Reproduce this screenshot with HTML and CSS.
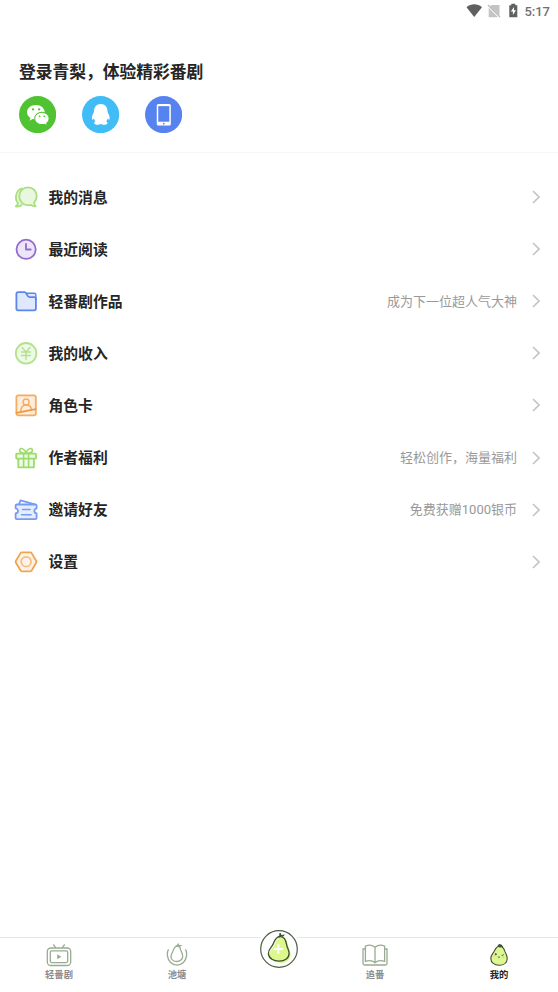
FILE: index.html
```html
<!DOCTYPE html>
<html lang="zh-CN">
<head>
<meta charset="utf-8">
<meta name="viewport" content="width=device-width, initial-scale=1">
<title>我的</title>
<link rel="stylesheet" href="styles.css">
</head>
<body>
<div class="app">
  <header class="status">
    <svg class="status-icons" viewBox="0 0 54 20">
      <path d="M.5 7.2C5.2 3.4 11.3 3.4 16 7.2L8.2 17Z" fill="#606060"/>
      <path d="M25.5 5h8v10.5L24 6.4ZM22.7 7.7v9.5H32Z" fill="#c4c4c4"/>
      <path d="M22 5l12 12" stroke="#b5b5b5" stroke-width="1.1"/>
      <path d="M43.3 5.2h2V3.8h4v1.4h2v12h-8Z" fill="#606060"/>
      <path d="M48 7l-3.2 4.6h2.1V15l3.1-4.7h-2Z" fill="#fff"/>
    </svg>
    <span class="time">5:17</span>
  </header>

  <section class="login">
    <h1 class="login-title">登录青梨，体验精彩番剧</h1>
    <div class="login-options">
      <svg class="login-icon" viewBox="0 0 37 37">
        <circle cx="18.5" cy="18.5" r="18.5" fill="#50c332"/>
        <path d="M16.8 9C11.9 9 8 12.1 8 16.2c0 2.4 1.3 4.4 3.4 5.7l-1 2.7 3.2-1.6c1.1.3 2 .4 3.3.4 4.9 0 8.7-3.2 8.7-7.2S21.7 9 16.8 9Z" fill="#fff"/>
        <circle cx="14" cy="13.4" r="1.15" fill="#50c332"/><circle cx="20" cy="13.4" r="1.15" fill="#50c332"/>
        <path d="M22.8 16.2c-4.1 0-7.2 2.7-7.2 6.1s3.1 6.1 7.2 6.1c.9 0 1.7-.1 2.5-.3l3 1.4-.8-2.5c1.6-1.2 2.5-2.8 2.5-4.7 0-3.4-3.1-6.1-7.2-6.1Z" fill="#fff" stroke="#50c332"/>
        <circle cx="20.5" cy="20.2" r=".9" fill="#50c332"/><circle cx="25.2" cy="20.2" r=".9" fill="#50c332"/>
      </svg>
      <svg class="login-icon" viewBox="0 0 37 37">
        <circle cx="18.5" cy="18.5" r="18.5" fill="#40bcf6"/>
        <path d="M18.7 8c-4.2 0-6.9 3.1-6.7 7.3 0 .7-.8 1.3-.7 2.2-1 1.7-1.8 3.6-1.3 5.7.4 1 1.3-.1 1.8-.8.3 1.1.8 2 1.6 2.8-1.1.5-1.6 1.2-1.2 2.2.8 1.8 5.3 1.5 6.5.2 1.2 1.3 5.8 1.6 6.5-.2.4-1-.2-1.7-1.2-2.2.8-.8 1.3-1.7 1.6-2.8.6.7 1.5 1.8 1.8.8.5-2.1-.3-4-1.4-5.7.1-.9-.6-1.5-.6-2.2.1-4.2-2.5-7.3-6.7-7.3Z" fill="#fff"/>
      </svg>
      <svg class="login-icon" viewBox="0 0 37 37">
        <circle cx="18.5" cy="18.5" r="18.5" fill="#5683f0"/>
        <rect x="11.7" y="8" width="14" height="21.3" rx="1.5" fill="#fff"/>
        <rect x="13.2" y="10.1" width="11" height="15.5" fill="#5683f0"/>
        <circle cx="18.7" cy="27.5" r=".9" fill="#5683f0"/>
      </svg>
    </div>
  </section>

  <main class="menu">
    <a class="row">
      <svg class="icon" viewBox="0 0 24 24" stroke="#a9df7d" fill="#e9f7df">
        <path d="M7.5 3.5C1.8 5.5.2 14 4 18c.1 1.3-1 2.5-2.2 3.3 2 .4 4.6-.2 6-1.2"/>
        <path d="M14 2.3c-5.1 0-8.8 4-8.8 9s3.7 9 8.8 9c1.1 0 2-.1 2.9-.4 1.5 1.2 3.4 1.7 4.8 1.5-.9-1-1.5-2.2-1.6-3.7 1.8-1.7 2.6-3.8 2.6-6.4 0-5-3.6-9-8.7-9Z"/>
      </svg>
      <span class="label">我的消息</span><svg class="arrow" viewBox="0 0 8 14"><path d="M1 1l6 6-6 6"/></svg>
    </a>
    <a class="row">
      <svg class="icon" viewBox="0 0 24 24" stroke="#946bd0" fill="#ede6f8"><circle cx="12.1" cy="12.3" r="9.6"/><path d="M12 6.8v5.7h4.7" fill="none"/></svg>
      <span class="label">最近阅读</span><svg class="arrow" viewBox="0 0 8 14"><path d="M1 1l6 6-6 6"/></svg>
    </a>
    <a class="row">
      <svg class="icon" viewBox="0 0 24 24" stroke="#5b86eb" fill="#e0e8fe"><path d="M12 4.2h8.2q1.7 0 1.7 1.7v5H12Z" stroke-width="1.4"/><path d="M2.4 5q0-1.8 1.8-1.8h6.5c2.3 0 1.9 5 4.8 5h4.7q1.7 0 1.7 1.8v9.6q0 1.7-1.8 1.7H4.2q-1.8 0-1.8-1.8Z"/></svg>
      <span class="label">轻番剧作品</span><span class="note">成为下一位超人气大神</span><svg class="arrow" viewBox="0 0 8 14"><path d="M1 1l6 6-6 6"/></svg>
    </a>
    <a class="row">
      <svg class="icon" viewBox="0 0 24 24" stroke="#b2e28c" fill="#eff9e8"><circle cx="12.1" cy="12.3" r="10.3"/><path d="M8 6.5l4 4.4 4-4.4M7.5 11h9M7.5 14.5h9M12 11v7.5" fill="none" stroke-width="1.4"/></svg>
      <span class="label">我的收入</span><svg class="arrow" viewBox="0 0 8 14"><path d="M1 1l6 6-6 6"/></svg>
    </a>
    <a class="row">
      <svg class="icon" viewBox="0 0 24 24" stroke="#f4ac62" fill="#fdeddd"><rect x="2.4" y="2.3" width="19.4" height="20" rx="1.8"/><circle cx="12.1" cy="9" r="3" stroke-width="1.4"/><path d="M6.7 17.9c.3-3.8 2-5.9 5.4-5.9s5.1 2 5.4 4.4" fill="none" stroke-width="1.4"/><path d="M2.5 19.9l19.2-3.8" stroke="#f0983d"/></svg>
      <span class="label">角色卡</span><svg class="arrow" viewBox="0 0 8 14"><path d="M1 1l6 6-6 6"/></svg>
    </a>
    <a class="row">
      <svg class="icon" viewBox="0 0 24 24" stroke="#9bdc6a" fill="#eff9e8"><path d="M4.3 12.5v8.9h15.6v-8.9"/><rect x="2.2" y="7.7" width="19.8" height="4.9" rx=".6"/><path d="M12 7.2C10 7.5 5.2 6.9 5.7 4.2 6.4.5 11.2 3.3 12 7.2c.8-3.9 5.7-6.7 6.4-3C18.9 6.9 14 7.5 12 7.2ZM9.6 8v13M14.6 8v13" fill="none" stroke-width="1.6"/></svg>
      <span class="label">作者福利</span><span class="note">轻松创作，海量福利</span><svg class="arrow" viewBox="0 0 8 14"><path d="M1 1l6 6-6 6"/></svg>
    </a>
    <a class="row">
      <svg class="icon" viewBox="0 0 24 24" stroke="#759cf1" fill="#e5edfd"><path d="M5 6.2l1.5-3.8 14.2 4" fill="#fff"/><path d="M2.8 6.5h18.6q1.2 0 1.2 1.2v2.6c-3 .7-3 4.5 0 5.2V20q0 1.2-1.2 1.2H2.8Q1.6 21.2 1.6 20v-4.5c3.2-.7 3.2-4.5 0-5.2V7.7q0-1.2 1.2-1.2Z"/><path d="M8.5 11.5h7.7M7.5 16.8h9.7" stroke-width="1.4"/></svg>
      <span class="label">邀请好友</span><span class="note">免费获赠1000银币</span><svg class="arrow" viewBox="0 0 8 14"><path d="M1 1l6 6-6 6"/></svg>
    </a>
    <a class="row">
      <svg class="icon" viewBox="0 0 24 24" stroke="#f2a34f" fill="#fef3e9"><path d="M7.7 2.3h8.8q.7 0 1 .6l4.8 8.1q.4.8 0 1.5l-4.8 8.2q-.3.6-1 .6H7.7q-.7 0-1-.6l-4.9-8.2q-.4-.7 0-1.5l4.9-8.1q.3-.6 1-.6Z"/><circle cx="12.1" cy="11.7" r="4.9" stroke="#f7bd85"/></svg>
      <span class="label">设置</span><svg class="arrow" viewBox="0 0 8 14"><path d="M1 1l6 6-6 6"/></svg>
    </a>
  </main>

  <nav class="tabs">
    <a class="tab">
      <svg class="tab-icon" viewBox="0 0 28 24"><g fill="none" stroke="#9aab93" stroke-width="1.3"><rect x="2.3" y="5" width="23.4" height="17.5" rx="3.5"/><rect x="5.3" y="7.8" width="17.4" height="11.8" rx="1.5"/><path d="M8.3 1.5l2.5 3.3M19.7 1.5l-2.5 3.3"/></g><path d="M12.2 11.2l4.2 2.5-4.2 2.5Z" fill="#9aab93"/></svg>
      <span>轻番剧</span>
    </a>
    <a class="tab">
      <svg class="tab-icon" viewBox="0 0 28 24"><g fill="none" stroke="#9aab93" stroke-width="1.3"><path d="M14.6 3.2c-2.6 0-3.7 2.1-4.3 4.2-.8 2.4-2.3 3.6-2.3 6 0 3 2.6 5.1 5.8 5.1s5.9-2.2 5.9-5.3c0-2.8-1.4-4-2-6.3-.4-1.7-1.4-3.7-3.1-3.7Z"/><path d="M5.5 6.3c-1.2 1.8-1.5 4-1.1 6.4.7 5.6 4.7 9.4 9.6 9.4s8.9-3.8 9.6-9.4c.4-2.4.1-4.6-1.1-6.4"/><path d="M12.8 3.4l1.7-1.2.7-1 .7 1.3 1.6.3-1.6.7"/></g></svg>
      <span>池塘</span>
    </a>
    <a class="tab tab-create" aria-label="创作">
      <svg class="create-icon" viewBox="0 0 44 44"><circle cx="22" cy="22" r="21.5" fill="#fff"/><circle cx="22" cy="22" r="18.3" fill="#fff" stroke="#4c5c43" stroke-width="1.2"/><path d="M24 10.5c-4.5.3-5.2 4.3-6.7 7.8-1.5 3.2-5 5.3-4.6 9.8.5 5 5.7 7.8 11.5 7.8 5.6 0 9.7-3.5 9.5-8.8-.1-3-2-5.4-2.6-9-.6-3.7-2.6-8-7.1-7.6Z" fill="#ddf88d"/><path d="M22.8 9.7c-4.4.3-5.3 4.2-6.8 7.7-1.5 3.2-4.9 4.7-4.6 9.2.4 4.9 5.2 7.5 10.8 7.5s10.1-2.8 9.9-8.1c-.1-3-1.9-4.8-2.5-8.4-.6-3.7-2.4-8.2-6.8-7.9Z" fill="none" stroke="#3e5132" stroke-width="1.3"/><path d="M20.5 10l2.2-1.9-1.1-1.3 2.3-.8.5 2.1 3.6-.5-2 2.2-2.1-.5-1 1.1Z" fill="#3e5132"/><path d="M21.3 17.3v9.4M16.6 22h9.4" stroke="#fff" stroke-width="2"/></svg>
    </a>
    <a class="tab">
      <svg class="tab-icon" viewBox="0 0 28 24"><g fill="none" stroke="#9aab93" stroke-width="1.3"><path d="M14 4.2C11.2 2 7.8 1.6 4.4 3.1v15.3c3.6-1.3 7-1 9.6 1.4 2.6-2.4 6-2.7 9.6-1.4V3.1C20.2 1.6 16.8 2 14 4.2Zm0 0v15.5"/><path d="M4.4 6H2v14.5q0 1.5 1.5 1.5h21q1.5 0 1.5-1.5V6h-2.4"/></g></svg>
      <span>追番</span>
    </a>
    <a class="tab tab-active">
      <svg class="tab-icon" viewBox="0 0 28 24"><path d="M14.1 3.2c-3.1.3-3.8 3-5 5.2-1.1 2-3.3 3.6-3.3 7 0 4.2 3.6 6.9 8.4 6.9s8-2.7 8-6.9c0-2.9-1.4-4.3-2.3-7-.8-2.6-2.6-5.5-5.8-5.2Z" fill="#def793" stroke="#3e5132" stroke-width="1.1"/><path d="M12.2 3.3l1.8-2.2 2.3.5 2 2.2-3.4.6Z" fill="#3e5132"/><circle cx="10.8" cy="11.3" r="1" fill="#3e5132"/><path d="M16.7 12.6l2-.9M12.8 13.8q1 1 2 .2" fill="none" stroke="#3e5132"/><circle cx="9.4" cy="13.2" r=".8" fill="#f7bf8f"/><circle cx="18.3" cy="14.4" r=".8" fill="#f7bf8f"/></svg>
      <span>我的</span>
    </a>
  </nav>
</div>
</body>
</html>
```
FILE: styles.css
```css
* { box-sizing: border-box; }

body {
  margin: 0;
  background: #fff;
  color: #252525;
  font-family: Roboto, "Noto Sans CJK SC", sans-serif;
}

.app {
  display: flex;
  flex-direction: column;
  width: 558px;
  height: 992px;
}

.status {
  display: flex;
  align-items: center;
  justify-content: flex-end;
  gap: 4px;
  height: 24px;
  padding-right: 8px;
}
.status-icons { width: 54px; height: 20px; margin-top: -4px; }
.time {
  color: #707070;
  font-size: 13px;
  font-weight: 500;
  line-height: 24px;
}

.login {
  height: 129px;
  padding: 36px 18.5px 0;
  border-bottom: 1px solid #f6f6f6;
}
.login-title {
  margin: 0 0 0 .5px;
  font-size: 16.75px;
  font-weight: 700;
  line-height: 24px;
}
.login-options { display: flex; gap: 26px; margin-top: 12px; }
.login-icon { width: 37.2px; height: 37.2px; }

.menu { flex: 1; padding: 18px 18px 0 14px; }
.row { display: flex; align-items: center; height: 52.1px; }
.icon {
  width: 24px;
  height: 24px;
  stroke-width: 1.8;
  stroke-linecap: round;
  stroke-linejoin: round;
}
.label {
  margin: 1px auto 0 10.5px;
  font-size: 14.8px;
  font-weight: 700;
  line-height: 22px;
}
.note { margin-top: 1px; color: #999; font-size: 13px; line-height: 20px; }
.arrow {
  width: 8px;
  height: 14px;
  margin-left: 15px;
  fill: none;
  stroke: #c4c4c4;
  stroke-width: 1.6;
}

.tabs {
  display: grid;
  grid-template-columns: 118px 118px 86px 106px 130px;
  height: 55px;
  border-top: 1px solid #e6e6e6;
}
.tab {
  display: flex;
  flex-direction: column;
  align-items: center;
  padding-top: 5px;
  color: #8c8c8c;
  font-size: 9.3px;
  font-weight: 700;
  line-height: 16px;
}
.tab-icon { width: 28px; height: 24px; }
.tab-create { padding: 0; }
.create-icon { width: 44px; height: 44px; margin-top: -11px; }
.tab-active { padding-left: 12px; color: #222; }
```
